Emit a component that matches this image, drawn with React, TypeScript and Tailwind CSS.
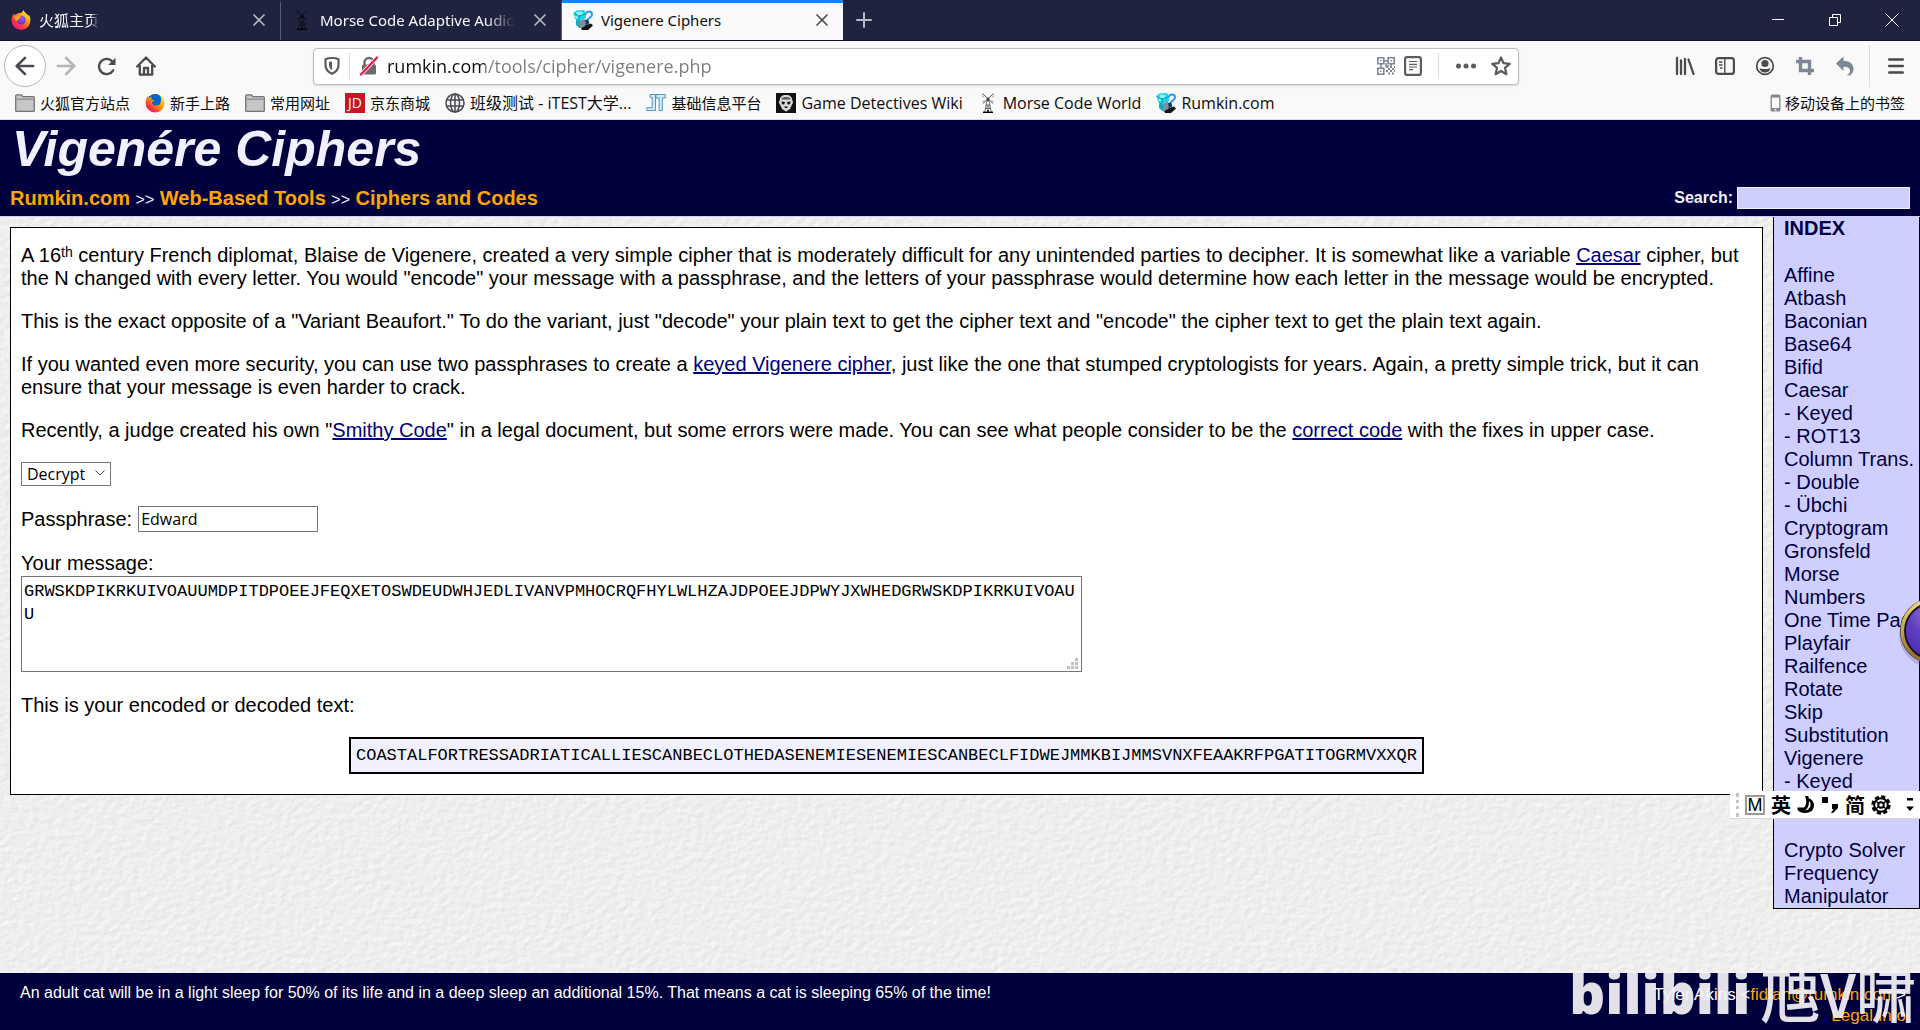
import React from 'react';
import { X, Plus, ArrowLeft, ArrowRight } from 'lucide-react';

interface IconProps {
    className?: string;
}

const UI_FONT = "font-['Noto_Sans','Noto_Sans_CJK_SC',sans-serif]";
const FIELD_FONT = "font-['Open_Sans','Noto_Sans_CJK_SC',sans-serif]";

const FirefoxIcon: React.FC<IconProps> = ({ className }) => (
    <svg viewBox="0 0 20 20" className={className} aria-hidden="true">
        <defs>
            <linearGradient id="fx-body" x1="0.85" y1="0.1" x2="0.2" y2="0.95">
                <stop offset="0" stopColor="#fff44f" />
                <stop offset="0.35" stopColor="#ff980e" />
                <stop offset="0.7" stopColor="#ff3647" />
                <stop offset="1" stopColor="#e31587" />
            </linearGradient>
            <radialGradient id="fx-globe" cx="0.6" cy="0.3" r="0.8">
                <stop offset="0" stopColor="#9059ff" />
                <stop offset="1" stopColor="#5b2fb8" />
            </radialGradient>
        </defs>
        <path fill="url(#fx-body)" d="M12.4 0c.6 1.900 2.100 2.700 3.300 4 .6.600 1.100 1.300 1.500 2l.5-1.200c1.200 1.700 1.800 3.600 1.700 5.700A9.500 9.500 0 0 1 10 20 9.500 9.500 0 0 1 .5 10.600C.5 8 1.200 5.600 2.800 3.400c0 .8.100 1.300.4 1.800C4 4.500 4.700 4.100 5.800 3.900c1.400-1.100 3-1.100 4.200-.9 1-.6 1.900-1.500 2.400-3z" />
        <circle cx="10.300" cy="10.200" r="4.400" fill="url(#fx-globe)" />
        <path fill="#ff9a1f" d="M3.200 6.200c1.700-1 3.400-.8 4.700.1 1 0 2.100 0 2.500.5-.2.900-1.700 1-2 1.500-.1 1.300-1.500 1.200-1.600 2.500C4.500 10.600 3 8.800 3.200 6.200z" />
    </svg>
);

const OldFirefoxIcon: React.FC<IconProps> = ({ className }) => (
    <svg viewBox="0 0 20 20" className={className} aria-hidden="true">
        <defs>
            <linearGradient id="fx-old" x1="0.9" y1="0.1" x2="0.2" y2="0.9">
                <stop offset="0" stopColor="#ffe226" />
                <stop offset="0.45" stopColor="#ff9a00" />
                <stop offset="1" stopColor="#ff0f5e" />
            </linearGradient>
        </defs>
        <circle cx="10" cy="9" r="8" fill="#0a63c9" />
        <path fill="url(#fx-old)" d="M14.500 1.500c3.200 2.100 5 5.200 4.900 9A9.400 9.400 0 0 1 10 19.600 9.400 9.400 0 0 1 .6 10.200c0-3 .8-5.500 2.400-7.700.1 1 .4 1.800 1 2.400 1-.6 2-.7 3-.4-.6.700-.8 1.500-.7 2.200 1.100.1 2.200 0 2.900.4-.1 1-1.700 1.400-2.200 2.200 0 1.600 1.200 3.200 3.400 3.200 1.800 0 2.800-1.300 4.100-.7 1.800-2.600 2.400-7 0-10.300z" />
        <path fill="#0a63c9" d="M9.500 1.200c3 0 5.300 2 5.500 5 .2 2.500-1 4-2.500 4.500-1.500-.5-2-1.500-1.500-3-1-.5-2-.5-2.800-.6 0-1.600-.4-3.600 1.300-5.900z" />
    </svg>
);

const FolderIcon: React.FC<IconProps> = ({ className }) => (
    <svg viewBox="0 0 20 20" className={className} fill="none" stroke="#737373" strokeWidth="1.300" aria-hidden="true">
        <path d="M.7 17.500V2.800c0-.6.400-1 1-1h4.600c.8 0 1.200 1.900 2 1.900h10c.6 0 1 .4 1 1v12.800c0 .5-.4.900-1 .9H1.700c-.6 0-1-.4-1-.9z" fill="#c6c6c8" />
        <path d="M1.500 6.200h17" stroke="#8c8c8e" />
    </svg>
);

const GlobeIcon: React.FC<IconProps> = ({ className }) => (
    <svg viewBox="0 0 20 20" className={className} fill="none" stroke="#4a4a4f" strokeWidth="1.500" aria-hidden="true">
        <circle cx="10" cy="10" r="9" />
        <ellipse cx="10" cy="10" rx="4.500" ry="9" />
        <path d="M10 1v18M1.500 7h17M1.500 13h17" />
    </svg>
);

const JtIcon: React.FC<IconProps> = ({ className }) => (
    <svg viewBox="0 0 20 20" className={className} fill="#d4e9f8" stroke="#4b97cc" strokeWidth="1" aria-hidden="true">
        <path d="M4 1.500h5.500V17.500H.8v-2.800h5.400V4.300H4z" />
        <path d="M10 1.500h9.300v3.500h-3V17.500h-3.200V5H10z" />
    </svg>
);

const DetectiveIcon: React.FC<IconProps> = ({ className }) => (
    <svg viewBox="0 0 20 20" className={className} aria-hidden="true">
        <path fill="#111" d="M0 0h20v20H0z" />
        <path fill="#d8d8d8" d="M10 2c4 0 6.300 2 6.300 5.500 1 .6 1 2.800-.2 3.700L14 16l-4 2.600L6 16l-2.100-4.800c-1.200-.9-1.200-3.100-.2-3.700C3.700 4 6 2 10 2z" />
        <path fill="#555" d="M6 5c2.500-1.400 5.500-1.400 8 0l.5 1.500h-9z" />
        <path fill="#111" d="M5.500 8.500l3.500.6-.8 2.300-2.200-.2zM14.500 8.500l-3.500.6.8 2.300 2.200-.2zM8 13.500h4L11 15H9z" />
    </svg>
);

const WindmillIcon: React.FC<IconProps> = ({ className }) => (
    <svg viewBox="0 0 14 20" className={className} fill="none" stroke="currentColor" aria-hidden="true">
        <path d="M1.500.5L12 10.500M12.500.5L2 10.500" strokeWidth=".9" />
        <path d="M.5 2L3 4.300M13.500 2L11 4.300M1.500 9L3.500 7.500M12.500 9L10.500 7.500" strokeWidth=".5" />
        <path d="M5.800 8L3.800 19M8.200 8L10.200 19M5 12h4M4.500 15.500h5M5 12l4.500 3.500M9 12l-4.500 3.500" strokeWidth=".7" />
        <path d="M5.800 5.500L7 4.500l1.200 1V8H5.800z" fill="currentColor" strokeWidth=".4" />
        <path d="M6 16.500h2V19H6z" fill="currentColor" stroke="none" />
        <path d="M2 19.300h10" stroke="#000" strokeWidth="1.400" />
    </svg>
);

const RumkinIcon: React.FC<IconProps> = ({ className }) => (
    <svg viewBox="0 0 20 20" className={className} aria-hidden="true">
        <path fill="#111" d="M8 18l5-3 5-1.500 2 2-5 4.500H9z" />
        <path fill="#16d7e8" d="M.5 3l3-2.500L11 0l2 3.500V8l-6 2.500L2 9z" />
        <path fill="#8af6fd" d="M3 2.500l3-1 4 .5-1 3-5 .5zM2 6l3 .5.5 2-3-.5z" />
        <path fill="#17a9c0" d="M3 9l4 1.500V18.500l-4-3.500z" />
        <path fill="#7b9298" d="M7 10.500l5-2v7.500l-5 2.500z" />
        <path fill="none" stroke="#2c9bf8" strokeWidth="2" d="M13 4.500c0-4 6-4 6 0 0 3-4 3-5 6.500" />
        <path fill="#0c3f66" d="M12 10l3-.5 1.500 3.500-4 3z" />
        <path fill="none" stroke="#0b7f94" strokeWidth=".7" d="M.5 3l5.500 3 6.500-2M6 6v4" />
    </svg>
);

const ReloadIcon: React.FC<IconProps> = ({ className }) => (
    <svg viewBox="0 0 20 20" className={className} fill="none" stroke="#4a4a4f" strokeWidth="2.500" aria-hidden="true">
        <path d="M16.500 5.200A8 8 0 1 0 17 14" strokeLinecap="round" />
        <path d="M19.500.8v7.700h-7.700z" fill="#4a4a4f" stroke="none" />
    </svg>
);

const HomeIcon: React.FC<IconProps> = ({ className }) => (
    <svg viewBox="0 0 20 20" className={className} fill="none" stroke="#4a4a4f" strokeWidth="2.300" strokeLinecap="round" strokeLinejoin="round" aria-hidden="true">
        <path d="M1.200 10.500L10 1.500l8.800 9M3.800 9.500v9.200h12.400V9.500" />
        <path d="M8 18v-6h4v6" />
    </svg>
);

const ShieldIcon: React.FC<IconProps> = ({ className }) => (
    <svg viewBox="0 0 18 20" className={className} aria-hidden="true">
        <path d="M9 2c2.500 0 4.800.5 6.500 1.300V9c0 4.300-2.300 7-6.500 8.700C4.800 16 2.500 13.300 2.500 9V3.300C4.200 2.500 6.500 2 9 2z" fill="none" stroke="#5b5b60" strokeWidth="2.200" />
        <path d="M9 5.500c-1 0-2 .1-3 .4V9c0 2.300 1 4 3 5.300z" fill="#5b5b60" />
    </svg>
);

const InsecureLockIcon: React.FC<IconProps> = ({ className }) => (
    <svg viewBox="0 0 20 20" className={className} aria-hidden="true">
        <path d="M5.500 9V6.500a4.500 4.500 0 0 1 9 0V9" fill="none" stroke="#6a6a6d" strokeWidth="2.400" />
        <rect x="3" y="8.500" width="14" height="10" rx="1.500" fill="#6a6a6d" />
        <path d="M2 18.500L18 1.500" stroke="#fff" strokeWidth="4" />
        <path d="M2 18.500L18 1.500" stroke="#f7164b" strokeWidth="2.400" strokeLinecap="round" />
    </svg>
);

const QrIcon: React.FC<IconProps> = ({ className }) => (
    <svg viewBox="0 0 18 18" className={className} fill="none" stroke="#7d8794" strokeWidth="1.600" aria-hidden="true">
        <path d="M.8.800h6v6h-6zM11.200.800h6v6h-6zM.8 11.200h6v6h-6zM3 3.800h1.500M13.500 3.800H15M3 14.200h1.500M7 4h4M4 7v4M9 6v3h3M14 7v3" />
        <path d="M9 10h9M9 14h9" strokeDasharray="2 2" strokeWidth="2" />
        <path d="M11 12h7M11 16.500h7" strokeDasharray="2 2" strokeWidth="2" />
    </svg>
);

const ReaderIcon: React.FC<IconProps> = ({ className }) => (
    <svg viewBox="0 0 18 20" className={className} fill="none" stroke="#5b5b60" aria-hidden="true">
        <rect x="1.100" y="1.100" width="15.800" height="17.800" rx="2" strokeWidth="2.200" />
        <path d="M5 5.500h8M5 8.300h8M5 11h8M5 13.700h4" strokeWidth="1.200" />
    </svg>
);

const StarIcon: React.FC<IconProps> = ({ className }) => (
    <svg viewBox="0 0 20 20" className={className} fill="none" stroke="#5b5b60" strokeWidth="2.200" strokeLinejoin="round" aria-hidden="true">
        <path d="M10 1.500l2.500 5.700 6.200.6-4.700 4.100 1.400 6.300L10 15l-5.400 3.200L6 11.900 1.300 7.800l6.200-.6z" />
    </svg>
);

const LibraryIcon: React.FC<IconProps> = ({ className }) => (
    <svg viewBox="0 0 20 20" className={className} fill="none" stroke="#4a4a4f" strokeWidth="2.300" strokeLinecap="round" aria-hidden="true">
        <path d="M2 2v16M6 4.500v13.500M10 3v15M13.500 3.500L18.500 18" />
    </svg>
);

const SidebarIcon: React.FC<IconProps> = ({ className }) => (
    <svg viewBox="0 0 20 20" className={className} fill="none" stroke="#4a4a4f" aria-hidden="true">
        <rect x="1.100" y="2.100" width="17.800" height="15.800" rx="2.500" strokeWidth="2.200" />
        <path d="M9.800 3v14" strokeWidth="1.400" />
        <path d="M4 6h3.500M4 9h3.500M5 12h2.500" strokeWidth="1.300" />
    </svg>
);

const AccountIcon: React.FC<IconProps> = ({ className }) => (
    <svg viewBox="0 0 20 20" className={className} aria-hidden="true">
        <circle cx="10" cy="10" r="8.300" fill="none" stroke="#4a4a4f" strokeWidth="1.700" />
        <circle cx="10" cy="7.500" r="3.600" fill="#4a4a4f" />
        <path d="M4.500 12.200c1.200 0 1.700.8 5.500.8s4.300-.8 5.500-.8c-.7 2.800-2.500 4.300-5.500 4.300s-4.800-1.500-5.500-4.300z" fill="#4a4a4f" />
    </svg>
);

const CropIcon: React.FC<IconProps> = ({ className }) => (
    <svg viewBox="0 0 20 20" className={className} fill="none" stroke="#7d8794" strokeWidth="3.400" aria-hidden="true">
        <path d="M5.500 1v13.500H19M1 5.500h13.500V19" />
    </svg>
);

const UndoIcon: React.FC<IconProps> = ({ className }) => (
    <svg viewBox="0 0 20 20" className={className} fill="#7d8794" aria-hidden="true">
        <path d="M1 7.500L8.500.500v4.300c6 .2 10 3 10 8.200 0 3.500-1.800 5.500-4 6.500h-3c2.400-1.200 3.600-2.700 3.500-4.800-.1-2.700-2.500-4-6.500-4v4.300z" />
    </svg>
);

const PhoneIcon: React.FC<IconProps> = ({ className }) => (
    <svg viewBox="0 0 12 20" className={className} aria-hidden="true">
        <rect x=".5" y=".5" width="11" height="19" rx="1.800" fill="#84898f" />
        <path fill="#fafafa" d="M2 4h8v11.500H2z" />
        <circle cx="6" cy="17.500" r="1" fill="#fafafa" />
    </svg>
);

const MoonIcon: React.FC<IconProps> = ({ className }) => (
    <svg viewBox="0 0 18 18" className={className} aria-hidden="true">
        <path fill="#000" d="M8 0h3.500v2C15 3.500 17 6 17 9c0 5-3.500 8-9 8-4 0-6.500-1.500-7.500-3.500v-2H7c2.500-2 3-6.500 1-11.500z" />
        <path fill="#fff" d="M12 5c1.800 1.500 2 4 1 6-1 2-2.500 3.200-5 3.500 3-2 4.200-5.500 4-9.500z" />
    </svg>
);

const GearIcon: React.FC<IconProps> = ({ className }) => (
    <svg viewBox="0 0 20 20" className={className} fill="none" stroke="#000" aria-hidden="true">
        <circle cx="10" cy="10" r="8.200" strokeWidth="3" strokeDasharray="4 2.440" />
        <circle cx="10" cy="10" r="6.800" strokeWidth="2" />
        <circle cx="10" cy="10" r="2.800" strokeWidth="2" />
        <path d="M5 14l2-2M15 14l-2-2M5 6l2 2M15 6l-2 2" strokeWidth="1.400" />
    </svg>
);

// Embossed paper behind the page
const PaperTexture: React.FC = () => (
    <svg className="absolute inset-0 -z-10 h-full w-full" aria-hidden="true">
        <filter id="paper" x="0" y="0" width="100%" height="100%" colorInterpolationFilters="sRGB">
            <feTurbulence type="fractalNoise" baseFrequency="0.14 0.18" numOctaves="2" seed="4" />
            <feDiffuseLighting lightingColor="#fffefc" surfaceScale="0.14" diffuseConstant="1.325">
                <feDistantLight azimuth="225" elevation="45" />
            </feDiffuseLighting>
        </filter>
        <rect width="100%" height="100%" filter="url(#paper)" />
    </svg>
);

const BOOKMARKS = [
    { label: '火狐官方站点', icon: <FolderIcon className="size-5" /> },
    { label: '新手上路', icon: <OldFirefoxIcon className="size-5" /> },
    { label: '常用网址', icon: <FolderIcon className="size-5" /> },
    { label: '京东商城', icon: <span className="flex size-5 items-center justify-center bg-[#c91623] text-sm text-white">JD</span> },
    { label: '班级测试 - iTEST大学...', icon: <GlobeIcon className="size-5" />, latin: true },
    { label: '基础信息平台', icon: <JtIcon className="size-5" /> },
    { label: 'Game Detectives Wiki', icon: <DetectiveIcon className="size-5" />, latin: true },
    { label: 'Morse Code World', icon: <WindmillIcon className="size-5 text-[#444]" />, latin: true },
    { label: 'Rumkin.com', icon: <RumkinIcon className="size-5" />, latin: true },
];

const INDEX_LINKS = [
    'Affine', 'Atbash', 'Baconian', 'Base64', 'Bifid', 'Caesar', '- Keyed', '- ROT13',
    'Column Trans.', '- Double', '- Übchi', 'Cryptogram', 'Gronsfeld', 'Morse', 'Numbers',
    'One Time Pad', 'Playfair', 'Railfence', 'Rotate', 'Skip', 'Substitution', 'Vigenere', '- Keyed',
];

const TOOL_LINKS = ['Crypto Solver', 'Frequency', 'Manipulator'];

const MESSAGE = 'GRWSKDPIKRKUIVOAUUMDPITDPOEEJFEQXETOSWDEUDWHJEDLIVANVPMHOCRQFHYLWLHZAJDPOEEJDPWYJXWHEDGRWSKDPIKRKUIVOAUU';
const RESULT = 'COASTALFORTRESSADRIATICALLIESCANBECLOTHEDASENEMIESENEMIESCANBECLFIDWEJMMKBIJMMSVNXFEAAKRFPGATITOGRMVXXQR';

interface TabProps {
    title: string;
    icon: React.ReactNode;
    active?: boolean;
}

const Tab: React.FC<TabProps> = ({ title, icon, active }) => (
    <div
        className={`flex w-[281px] items-center border-t-3 pr-[11px] pb-[3px] pl-[11px] ${
            active ? 'border-[#0a84ff] bg-[#f9f9fa] text-[#0c0c0d]' : 'border-transparent border-r border-r-[#5c5d70] text-[#f9f9fa]'
        }`}
    >
        <button className="flex min-w-0 flex-1 items-center gap-2 text-left">
            <span className="flex size-5 flex-none items-center justify-center">{icon}</span>
            <span className={`overflow-hidden whitespace-nowrap ${active ? '' : 'mask-r-from-85%'}`}>{title}</span>
        </button>
        <button aria-label="Close tab" className={`flex-none ${active ? 'text-[#4a4a4f]' : 'text-[#b9b9c3]'}`}>
            <X className="size-5" strokeWidth={2} />
        </button>
    </div>
);

const ToolbarButton: React.FC<{ label: string; children: React.ReactNode }> = ({ label, children }) => (
    <button aria-label={label} className="flex w-10 items-center justify-center">
        {children}
    </button>
);

const BrowserChrome: React.FC = () => (
    <div className={`bg-[#f9f9fa] text-[15px] leading-5 text-[#0c0c0d] ${UI_FONT}`}>
        <div className="flex h-[41px] border-b border-[#12122b] bg-[#202340]">
            <Tab title="火狐主页" icon={<FirefoxIcon className="size-5" />} />
            <Tab title="Morse Code Adaptive Audio" icon={<WindmillIcon className="h-5 w-3.5 text-[#0b0b12]" />} />
            <Tab title="Vigenere Ciphers" icon={<RumkinIcon className="size-5" />} active />
            <button aria-label="New tab" className="flex w-[42px] items-center justify-center text-[#b9b9c3]">
                <Plus className="size-6" strokeWidth={2} />
            </button>
            <div className="ml-auto flex text-white">
                <button aria-label="Minimize" className="flex w-[57px] items-center justify-center">
                    <svg viewBox="0 0 12 12" className="size-3" stroke="currentColor"><path d="M0 5.500h12" /></svg>
                </button>
                <button aria-label="Restore" className="flex w-[57px] items-center justify-center">
                    <svg viewBox="0 0 12 12" className="size-3" fill="none" stroke="currentColor"><path d="M.5 3.500h8v8h-8zM3.500 3.500v-3h8v8h-3" /></svg>
                </button>
                <button aria-label="Close" className="flex w-[57px] items-center justify-center">
                    <svg viewBox="0 0 14 14" className="size-3.5" stroke="currentColor"><path d="M.5.500l13 13M13.500.500l-13 13" /></svg>
                </button>
            </div>
        </div>

        <div className="flex h-[50px] items-center pr-1 pl-1">
            <div className="flex w-[309px] flex-none items-center">
                <button aria-label="Back" className="flex size-[42px] items-center justify-center rounded-full border border-[#b5b5b8] bg-white text-[#4a4a4f]">
                    <ArrowLeft className="size-7" strokeWidth={2.2} />
                </button>
                <button aria-label="Forward" className="flex w-10 items-center justify-center text-[#b5b5b7]">
                    <ArrowRight className="size-7" strokeWidth={2.2} />
                </button>
                <ToolbarButton label="Reload"><ReloadIcon className="size-[19px]" /></ToolbarButton>
                <ToolbarButton label="Home"><HomeIcon className="size-5" /></ToolbarButton>
            </div>
            <div className="flex h-[37px] min-w-0 flex-1 items-center rounded-sm border border-[#bebec0] bg-white shadow-sm">
                <button aria-label="Tracking protection" className="flex h-[26px] w-9 items-center justify-center border-r border-[#dcdcde]">
                    <ShieldIcon className="h-5 w-[18px]" />
                </button>
                <button aria-label="Connection is not secure" className="flex w-[37px] items-center justify-center">
                    <InsecureLockIcon className="size-5" />
                </button>
                <input
                    aria-label="Address"
                    defaultValue="rumkin.com/tools/cipher/vigenere.php"
                    className={`min-w-0 flex-1 bg-linear-[90deg,#0c0c0d_98px,#7c7c7f_98px] bg-clip-text text-lg text-transparent outline-none ${FIELD_FONT}`}
                />
                <button aria-label="QR code" className="mr-[9px]"><QrIcon className="size-[18px]" /></button>
                <button aria-label="Reader view" className="mr-4"><ReaderIcon className="h-5 w-[18px]" /></button>
                <button aria-label="Page actions" className="flex h-[26px] w-[46px] items-center justify-center border-l border-[#dcdcde] pl-2">
                    <svg viewBox="0 0 20 6" className="h-1.5 w-5" fill="#5b5b60"><circle cx="2.500" cy="3" r="2.500" /><circle cx="10" cy="3" r="2.500" /><circle cx="17.500" cy="3" r="2.500" /></svg>
                </button>
                <button aria-label="Bookmark this page" className="mx-[7px]"><StarIcon className="size-5" /></button>
            </div>
            <div className="flex w-[397px] flex-none items-center justify-end">
                <ToolbarButton label="Library"><LibraryIcon className="size-5" /></ToolbarButton>
                <ToolbarButton label="Sidebars"><SidebarIcon className="size-5" /></ToolbarButton>
                <ToolbarButton label="Account"><AccountIcon className="size-5" /></ToolbarButton>
                <ToolbarButton label="Screenshot"><CropIcon className="size-5" /></ToolbarButton>
                <ToolbarButton label="Undo"><UndoIcon className="size-5" /></ToolbarButton>
                <button aria-label="Open menu" className="ml-1 flex h-[42px] w-[47px] items-center justify-center border-l border-[#dcdcde] pl-1.5">
                    <svg viewBox="0 0 16 16" className="size-4" stroke="#4a4a4f" strokeWidth="2.400" strokeLinecap="round"><path d="M1.200 1.500h13.600M1.200 8h13.600M1.200 14.500h13.600" /></svg>
                </button>
            </div>
        </div>

        <nav className={`flex h-[29px] items-center gap-[15px] border-b border-[#dcdcde] pr-[15px] pb-1 pl-[15px] text-[#0c0c0d] ${FIELD_FONT}`}>
            {BOOKMARKS.map((bookmark) => (
                <a key={bookmark.label} href="#" className={`flex items-center gap-[5px] whitespace-nowrap ${bookmark.latin ? 'text-[16px]' : ''}`}>
                    {bookmark.icon}
                    {bookmark.label}
                </a>
            ))}
            <a href="#" className="ml-auto flex items-center gap-1 whitespace-nowrap">
                <PhoneIcon className="h-[18px] w-[11px]" />
                移动设备上的书签
            </a>
        </nav>
    </div>
);

const PageHeader: React.FC = () => (
    <header className="flex items-end justify-between border-b border-[#cfcfff] bg-[#00003c] px-2.5 font-bold text-[#f0f0ff]">
        <div>
            <h1 className="pl-0.5 text-[50px] leading-[58px] italic">Vigenére Ciphers</h1>
            <p className="pt-[9px] pb-1.5 text-xl leading-[23px] text-[#ffa500]">
                <a href="#">Rumkin.com</a>{' '}
                <span className="text-[16px] leading-none font-normal text-[#f0f0ff]">&gt;&gt;</span>{' '}
                <a href="#">Web-Based Tools</a>{' '}
                <span className="text-[16px] leading-none font-normal text-[#f0f0ff]">&gt;&gt;</span>{' '}
                <a href="#">Ciphers and Codes</a>
            </p>
        </div>
        <div className="flex items-center gap-1 pb-[7px]">
            <label htmlFor="search" className="text-base leading-[22px]">Search:</label>
            <input id="search" className="h-[22px] w-[173px] border border-[#f0f0ff] bg-[#cfcfff] px-1 text-base text-[#00003c]" />
        </div>
    </header>
);

const CipherPanel: React.FC = () => (
    <main className="mt-2.5 ml-2.5 flex-1 border border-black bg-white px-2.5 pt-4 pb-5 [&_a]:text-[#000080] [&_a]:underline">
        <div className="flex flex-col items-start gap-5">
            <p>
                A 16<sup className="top-[-5px] text-[14px] leading-none">th</sup> century French diplomat, Blaise de Vigenere, created a very simple cipher that is moderately difficult
                for any unintended parties to decipher. It is somewhat like a variable <a href="#">Caesar</a> cipher, but the N changed with every letter.
                You would "encode" your message with a passphrase, and the letters of your passphrase would determine how each letter in the message would be encrypted.
            </p>
            <p>
                This is the exact opposite of a "Variant Beaufort." To do the variant, just "decode" your plain text to get the cipher text
                and "encode" the cipher text to get the plain text again.
            </p>
            <p>
                If you wanted even more security, you can use two passphrases to create a <a href="#">keyed Vigenere cipher</a>, just like the one that
                stumped cryptologists for years. Again, a pretty simple trick, but it can ensure that your message is even harder to crack.
            </p>
            <p>
                Recently, a judge created his own "<a href="#">Smithy Code</a>" in a legal document, but some errors were made. You can see what people
                consider to be the <a href="#">correct code</a> with the fixes in upper case.
            </p>

            <div className="relative flex">
                <select aria-label="Mode" className={`h-6 w-[90px] appearance-none border border-[#767676] bg-white pl-[5px] text-base leading-5 ${FIELD_FONT}`}>
                    <option>Decrypt</option>
                    <option>Encrypt</option>
                </select>
                <svg viewBox="0 0 10 6" className="pointer-events-none absolute top-2 right-1.5 h-1.5 w-2.5" fill="none" stroke="#444"><path d="M.5.500L5 5 9.500.500" /></svg>
            </div>

            <div className="flex items-center gap-1.5">
                <label htmlFor="passphrase">Passphrase:</label>
                <input id="passphrase" defaultValue="Edward" className={`h-[26px] w-[180px] border border-[#767676] px-0.5 text-base ${FIELD_FONT}`} />
            </div>

            <div className="flex flex-col">
                <label htmlFor="message" className="pb-px">Your message:</label>
                <div className="relative flex">
                    <textarea
                        id="message"
                        defaultValue={MESSAGE}
                        className="h-24 w-[1061px] resize-none overflow-hidden border border-[#767676] px-0.5 py-[3px] font-['Liberation_Mono',monospace] text-[17px] leading-[23px] break-all"
                    />
                    <svg viewBox="0 0 11 11" className="pointer-events-none absolute right-1 bottom-[3px] size-[11px]" fill="#bfbfbf">
                        <path d="M8 0h3v3H8zM4 4h3v3H4zM8 4h3v3H8zM0 8h3v3H0zM4 8h3v3H4zM8 8h3v3H8z" />
                    </svg>
                </div>
            </div>

            <p className="pt-0.5">This is your encoded or decoded text:</p>
            <output className="self-center border-2 border-black bg-[#f0f0ff] px-[5px] py-[5px] font-['Liberation_Mono',monospace] text-[17px]">{RESULT}</output>
        </div>
    </main>
);

const IndexSidebar: React.FC = () => (
    <aside className="w-[147px] flex-none border-x border-b border-black bg-[#cfcfff] pl-2.5 text-[#000040]">
        <h2 className="mb-6 font-bold">INDEX</h2>
        <ul className="mb-[46px] whitespace-nowrap">
            {INDEX_LINKS.map((link, i) => (
                <li key={i}><a href="#">{link}</a></li>
            ))}
        </ul>
        <ul>
            {TOOL_LINKS.map((link) => (
                <li key={link}><a href="#">{link}</a></li>
            ))}
        </ul>
    </aside>
);

const PageFooter: React.FC = () => (
    <footer className="flex justify-between bg-[#00003c] pt-2 pr-3.5 pb-1 pl-5 leading-[21px] text-white">
        <p className="pt-px text-[16px]">An adult cat will be in a light sleep for 50% of its life and in a deep sleep an additional 15%. That means a cat is sleeping 65% of the time!</p>
        <p className="pt-[3px] text-right text-[17px]">
            Tyler Akins &lt;<a href="#" className="text-[#ffa500]">fidian@rumkin.com</a>&gt;
            <br />
            <a href="#" className="text-[#ffa500]">Legal Info</a>
        </p>
    </footer>
);

// Floating input method bar
const ImeBar: React.FC = () => (
    <div className="absolute top-[791px] right-0 flex h-7 w-[190px] items-center gap-1.5 border-b border-[#d8d8d8] bg-white pr-1.5 pl-1.5 font-['Noto_Sans_CJK_SC',sans-serif] text-xl font-bold text-black">
        <span className="h-6 border-l-3 border-dotted border-[#c4c4c4]" />
        <span className="flex size-5 items-center justify-center border-2 border-[#9a9a9a] font-['Liberation_Sans',sans-serif] text-lg font-normal">M</span>
        <span>英</span>
        <MoonIcon className="size-[18px]" />
        <svg viewBox="0 0 18 18" className="size-[18px]"><path d="M1 1h6v6H1zM11 8h6v4l-5 5h-2l2.500-4H11z" /></svg>
        <span>简</span>
        <GearIcon className="size-5" />
        <svg viewBox="0 0 8 14" className="ml-auto h-3.5 w-2"><path d="M1 0h6v2.500H1zM0 8.500h8L4 13z" /></svg>
    </div>
);

// Desktop widget that peeks out of the right edge
const Orb: React.FC = () => (
    <svg viewBox="0 0 24 76" className="absolute top-[593px] right-0 h-[76px] w-6" aria-hidden="true">
        <defs>
            <radialGradient id="orb-fill" cx="0.5" cy="0.2" r="0.8">
                <stop offset="0" stopColor="#9a78d0" />
                <stop offset="0.5" stopColor="#5f3fc0" />
                <stop offset="1" stopColor="#4a28b4" />
            </radialGradient>
            <linearGradient id="orb-ring" x1="0" y1="0" x2="0" y2="1">
                <stop offset="0" stopColor="#f3d877" />
                <stop offset="1" stopColor="#8c6a24" />
            </linearGradient>
        </defs>
        <circle cx="37" cy="41" r="34" fill="#6a5aa0" opacity=".3" />
        <circle cx="37" cy="38" r="33" fill="#2a2318" />
        <circle cx="37" cy="38" r="30.500" fill="url(#orb-fill)" stroke="url(#orb-ring)" strokeWidth="4" />
        <circle cx="37" cy="38" r="28" fill="none" stroke="#15101f" strokeWidth="1.800" />
    </svg>
);

const Watermark: React.FC = () => (
    <div className="pointer-events-none absolute right-1 bottom-0 flex items-center gap-2.5 leading-[76px] whitespace-nowrap text-[#f4f4f6]/92">
        <span className="font-['Open_Sans',sans-serif] text-[56px] font-extrabold">bilibili</span>
        <span className="font-['Noto_Sans_CJK_SC',sans-serif] text-[60px] font-medium">虺V啸</span>
    </div>
);

export default function App() {
    return (
        <div className="relative isolate flex min-h-screen flex-col overflow-hidden bg-[#efeeed] font-['Liberation_Sans',sans-serif] text-xl leading-[23px] text-black">
            <PaperTexture />
            <BrowserChrome />
            <PageHeader />
            <div className="flex flex-1 items-start gap-2.5">
                <CipherPanel />
                <IndexSidebar />
            </div>
            <PageFooter />
            <Orb />
            <ImeBar />
            <Watermark />
        </div>
    );
}
